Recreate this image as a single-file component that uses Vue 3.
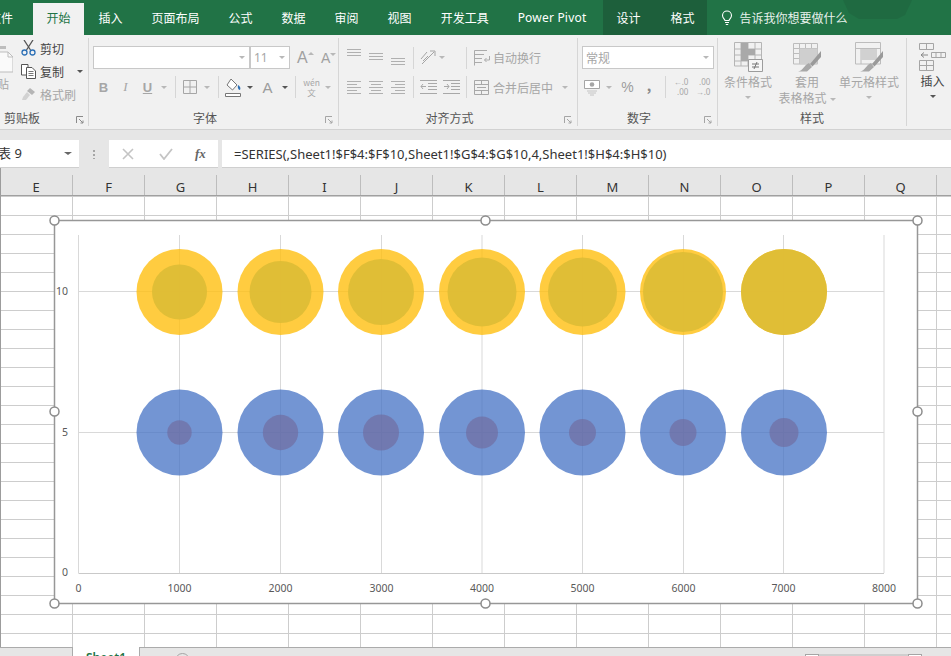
<template>
  <div class="excel">
    <div class="tabs">
      <span class="tab tab-file">文件</span>
      <span class="tab tab-home">开始</span>
      <span v-for="t in tabs" :key="t" class="tab">{{ t }}</span>
      <span class="tab tab-latin">Power Pivot</span>
      <div class="tool-tabs">
        <span>设计</span>
        <span>格式</span>
      </div>
      <svg class="bulb" width="12" height="16" viewBox="0 0 12 16" fill="none" stroke="#fff" stroke-width="1.1">
        <path d="M4 10.5C3.6 9 1.5 8 1.5 5.5a4.5 4.5 0 0 1 9 0C10.500 8 8.400 9 8 10.500Z" />
        <path d="M4 12.500h4M4.800 14.500h2.400" />
      </svg>
      <span class="tell">告诉我你想要做什么</span>
      <svg class="smudge" width="70" height="19" viewBox="0 0 70 19">
        <path d="M0 0H69L62 15L54 19H16L6 13Z" fill="#1f6a41" />
      </svg>
    </div>

    <div class="ribbon">
      <!-- 剪贴板 -->
      <div class="group g-clip">
        <div class="clip-body">
          <div class="paste">
            <svg width="13" height="28" viewBox="0 0 13 28">
              <path d="M-6 4H6V1H-1V4" fill="#bdbdbd" />
              <path d="M-2 7H8L13 12V27H-2Z" fill="#fafafa" stroke="#bdbdbd" />
              <path d="M8 7V12H13" fill="none" stroke="#bdbdbd" />
            </svg>
            <span>贴</span>
          </div>
          <div class="clip-list">
            <div class="clip-item">
              <svg width="15" height="16" viewBox="0 0 15 16" fill="none">
                <path d="M3 0L9.500 10M12 0L5.500 10" stroke="#555" stroke-width="1.300" />
                <circle cx="3.500" cy="12.500" r="2.500" stroke="#2b6fb5" stroke-width="1.300" />
                <circle cx="11.500" cy="12.500" r="2.500" stroke="#2b6fb5" stroke-width="1.300" />
              </svg>
              <span class="dark">剪切</span>
            </div>
            <div class="clip-item">
              <svg width="15" height="15" viewBox="0 0 15 15" fill="#fff" stroke="#555">
                <path d="M.5.500H7V11H.5Z" />
                <path d="M5.500 3.500H11L14.500 7V14.500H5.500Z" />
                <path d="M7.500 7.500H12.500M7.500 9.500H12.500M7.500 11.500H12.500" stroke-width=".8" />
              </svg>
              <span class="dark">复制</span>
              <i class="caret dark-caret copy-caret"></i>
            </div>
            <div class="clip-item">
              <svg width="15" height="15" viewBox="0 0 15 15">
                <path d="M9 1L14 5L11 8L6 4Z" fill="#b5b5b5" />
                <path d="M6 5L9 8L5 13L1 13L2 10Z" fill="#d2d2d2" />
              </svg>
              <span>格式刷</span>
            </div>
          </div>
        </div>
        <div class="g-label clip-label">
          <span>剪贴板</span>
          <svg class="launch" width="8" height="8" viewBox="0 0 8 8" fill="none" stroke="#8a8a8a">
            <path d="M.5 7V.5H7M3 3L7 7M4.500 7H7V4.500" />
          </svg>
        </div>
      </div>

      <!-- 字体 -->
      <div class="group g-font">
        <div class="g-body">
          <div class="row font-row1">
            <div class="input font-name"><i class="caret"></i></div>
            <div class="input font-size"><span>11</span><i class="caret"></i></div>
            <div class="grow-a big-a">A<i class="caret up"></i></div>
            <div class="grow-a small-a">A<i class="caret"></i></div>
          </div>
          <div class="row font-row2">
            <b class="fmt bold">B</b>
            <i class="fmt ital">I</i>
            <u class="fmt under">U</u>
            <i class="caret"></i>
            <i class="sep"></i>
            <svg width="14" height="14" viewBox="0 0 14 14" fill="none" stroke="#a6a6a6"><path d="M.5.500H13.500V13.500H.5ZM7 .5V13.500M.5 7H13.500" /></svg>
            <i class="caret"></i>
            <i class="sep"></i>
            <svg width="18" height="19" viewBox="0 0 18 19">
              <path d="M6 1L12 7L7.500 12L2 7Z" fill="#fff" stroke="#777" />
              <path d="M13 7C15 8 16 10 15 12C13 12 12.500 9 13 7Z" fill="#2b6fb5" />
              <path d="M.5 15.500H15.500V18.500H.5Z" fill="#fff" stroke="#777" />
            </svg>
            <i class="caret dark-caret"></i>
            <span class="font-a">A</span>
            <i class="caret dark-caret"></i>
            <i class="sep"></i>
            <span class="wen"><small>wén</small><small>文</small></span>
            <i class="caret"></i>
          </div>
        </div>
        <div class="g-label">
          <span>字体</span>
          <svg class="launch" width="8" height="8" viewBox="0 0 8 8" fill="none" stroke="#a5a5a5">
            <path d="M.5 7V.5H7M3 3L7 7M4.500 7H7V4.500" />
          </svg>
        </div>
      </div>

      <!-- 对齐方式 -->
      <div class="group g-align">
        <div class="g-body">
          <div class="row align-row1">
            <svg v-for="y in [3, 7, 12]" :key="y" width="14" height="23" viewBox="0 0 14 23" fill="none" stroke="#b0b0b0">
              <path :d="`M0 ${y}.5H14M0 ${y + 3}.5H14M0 ${y + 6}.5H14`" />
            </svg>
            <i class="sep"></i>
            <span class="orient">
              <svg width="17" height="17" viewBox="0 0 17 17" fill="none" stroke="#a5a5a5">
                <path d="M2 10L8 3M4 12L9 7M3 15L15 3M11 2H16V7" />
              </svg>
              <i class="caret"></i>
            </span>
            <span></span>
            <i class="sep"></i>
            <svg width="16" height="16" viewBox="0 0 16 16" fill="none" stroke="#ababab">
              <path d="M.5.500H13M.5 4.500H10M.5 8.500H8M.5 12.500H8M.5.500V15.500M15.500 6V10H10.500M12.500 8L10.500 10L12.500 12" />
            </svg>
            <span class="txt">自动换行</span>
          </div>
          <div class="row align-row2">
            <svg v-for="a in alignPaths" :key="a" width="14" height="14" viewBox="0 0 14 14" fill="none" stroke="#b0b0b0">
              <path :d="a" />
            </svg>
            <i class="sep"></i>
            <svg v-for="a in indentPaths" :key="a" width="17" height="14" viewBox="0 0 17 14" fill="none" stroke="#a8a8a8">
              <path :d="a" />
            </svg>
            <i class="sep"></i>
            <svg width="15" height="15" viewBox="0 0 15 15" fill="none" stroke="#a8a8a8">
              <path d="M.5.500H14.500V14.500H.5ZM.5 4.500H14.500M.5 10.500H14.500M3 7.500H12M7.500 .5V4.500M7.500 10.500V14.500" />
            </svg>
            <span class="txt">合并后居中</span>
            <i class="caret"></i>
          </div>
        </div>
        <div class="g-label">
          <span>对齐方式</span>
          <svg class="launch" width="8" height="8" viewBox="0 0 8 8" fill="none" stroke="#a5a5a5">
            <path d="M.5 7V.5H7M3 3L7 7M4.500 7H7V4.500" />
          </svg>
        </div>
      </div>

      <!-- 数字 -->
      <div class="group g-number">
        <div class="g-body">
          <div class="row">
            <div class="input num-format"><span>常规</span><i class="caret"></i></div>
          </div>
          <div class="row num-row2">
            <svg width="17" height="17" viewBox="0 0 17 17">
              <path d="M.5 1.500H15.500V9.500H.5Z" fill="#fff" stroke="#a5a5a5" />
              <circle cx="8" cy="5.500" r="2.300" fill="#a5a5a5" />
              <path d="M3 12H13M4 14H12M6 16H10" stroke="#c4c4c4" />
            </svg>
            <i class="caret"></i>
            <span class="pct">%</span>
            <span class="comma">,</span>
            <i class="sep"></i>
            <span class="dec"><span>←.0</span><span>.00</span></span>
            <span class="dec"><span>.00</span><span>→.0</span></span>
          </div>
        </div>
        <div class="g-label">
          <span>数字</span>
          <svg class="launch" width="8" height="8" viewBox="0 0 8 8" fill="none" stroke="#a5a5a5">
            <path d="M.5 7V.5H7M3 3L7 7M4.500 7H7V4.500" />
          </svg>
        </div>
      </div>

      <!-- 样式 -->
      <div class="group g-style">
        <div class="style-body">
          <div class="big w-cond">
            <svg width="30" height="30" viewBox="0 0 30 30" fill="none" stroke="#b5b5b5">
              <path d="M1.500.500H28.500V24H1.500ZM1.500 7H28.500M1.500 13H28.500M1.500 19H28.500M8 .5V24M15 .5V24M22 .5V24" />
              <path d="M8 1H15V7H22V13H15V19H8Z" fill="#a9a9a9" stroke="none" />
              <path d="M15.500 17.500H29.500V29.500H15.500Z" fill="#f6f6f6" stroke="#9c9c9c" />
              <path d="M19 22H26M19 25H26M24 20L21 27" stroke="#777" />
            </svg>
            <span>条件格式</span>
            <i class="caret"></i>
          </div>
          <div class="big w-table">
            <svg width="30" height="30" viewBox="0 0 30 30" fill="none" stroke="#bcbcbc">
              <path d="M1.500 1.500H25.500V22H1.500ZM1.500 6.500H25.500M1.500 11.500H25.500M1.500 16.500H25.500M7.500 1.500V22M13.500 1.500V22M19.500 1.500V22" />
              <path d="M7.500 6.500H25.500V22H7.500Z" fill="#cfcfcf" stroke="none" />
              <path d="M29 9L18 22L20.500 24.500L29 15Z" fill="#9a9a9a" stroke="none" />
              <path d="M17 21L20 25L15 29.500H6C11 29 12 23 17 21Z" fill="#a8a8a8" stroke="none" />
            </svg>
            <span>套用</span>
            <span class="with-caret">表格格式<i class="caret"></i></span>
          </div>
          <div class="big w-cell">
            <svg width="30" height="30" viewBox="0 0 30 30" fill="none" stroke="#bcbcbc">
              <path d="M1.500 .5H26.500V22H1.500ZM1.500 6.500H26.500M7 6.500V22" />
              <path d="M7 7H23V18H7Z" fill="#d1d1d1" stroke="none" />
              <path d="M29 9L18 22L20.500 24.500L29 15Z" fill="#9a9a9a" stroke="none" />
              <path d="M17 21L20 25L15 29.500H6C11 29 12 23 17 21Z" fill="#a8a8a8" stroke="none" />
            </svg>
            <span>单元格样式</span>
            <i class="caret"></i>
          </div>
        </div>
        <div class="g-label style-label"><span>样式</span></div>
      </div>

      <!-- 单元格 -->
      <div class="insert">
        <svg width="27" height="28" viewBox="0 0 27 28" fill="none" stroke="#a5a5a5">
          <path d="M.5.500H14.500V6.500H.5ZM7.500.5V6.500M.5 17.500H14.500V27.500H.5ZM7.500 17.500V27.500M.5 22.500H14.500" />
          <path d="M12.500 9.500H26.500V14.500H12.500ZM17 9.500V14.500M22 9.500V14.500" />
          <path d="M2 12H9M5 9.500L2 12L5 14.500" stroke="#888" />
        </svg>
        <span>插入</span>
        <i class="caret dark-caret"></i>
      </div>
    </div>

    <div class="formula-band">
      <div class="name-box"><span>表 9</span><i class="caret name-caret"></i></div>
      <span class="dots"></span>
      <div class="fx-box">
        <svg width="12" height="12" viewBox="0 0 12 12" fill="none" stroke="#c4c4c4" stroke-width="1.600"><path d="M1 1L11 11M11 1L1 11" /></svg>
        <svg width="14" height="12" viewBox="0 0 14 12" fill="none" stroke="#c4c4c4" stroke-width="1.800"><path d="M1 6L5 11L13 1" /></svg>
        <i class="fx-label">fx</i>
      </div>
      <div class="formula">=SERIES(,Sheet1!$F$4:$F$10,Sheet1!$G$4:$G$10,4,Sheet1!$H$4:$H$10)</div>
    </div>

    <div class="col-head">
      <span v-for="c in columns" :key="c" class="col">{{ c }}</span>
    </div>

    <div class="sheet">
      <svg class="chart" width="951" height="451" viewBox="0 196 951 451">
        <rect x="54.500" y="220.500" width="863" height="383" fill="#fff" stroke="#979797" stroke-width="1.500" />
        <g stroke="#d9d9d9">
          <path v-for="(x, i) in xGrid" :key="i" :d="`M${x} 235V573`" />
          <path d="M78.500 291.500H884M78.500 432.500H884" />
        </g>
        <path d="M78.500 573.500H884" stroke="#c9c9c9" />
        <circle v-for="b in bubbles" :key="b.id" :cx="b.x" :cy="b.y" :r="b.r" :fill="b.fill" :fill-opacity="b.opacity" />
        <g class="axis">
          <text x="68" y="295" text-anchor="end">10</text>
          <text x="68" y="436" text-anchor="end">5</text>
          <text x="68" y="576" text-anchor="end">0</text>
          <text v-for="(x, i) in xGrid" :key="i" :x="x" y="592" text-anchor="middle">{{ i * 1000 }}</text>
        </g>
        <circle v-for="h in handles" :key="h.join()" :cx="h[0]" :cy="h[1]" r="4.500" fill="#fff" stroke="#8c8c8c" stroke-width="1.500" />
      </svg>
    </div>

    <div class="status">
      <div class="sheet-tab">Sheet1</div>
      <span class="add"></span>
      <span class="zoom-minus"></span>
      <span class="zoom-box"></span>
      <span class="zoom-bar"></span>
      <span class="zoom-box"></span>
    </div>
  </div>
</template>

<script setup>
const tabs = ['插入', '页面布局', '公式', '数据', '审阅', '视图', '开发工具']
const columns = 'EFGHIJKLMNOPQ'.split('')

const alignPaths = [
  'M0 1.500H14M0 4.500H10M0 7.500H14M0 10.500H10M0 13.500H14',
  'M0 1.500H14M2 4.500H12M0 7.500H14M2 10.500H12M0 13.500H14',
  'M0 1.500H14M4 4.500H14M0 7.500H14M4 10.500H14M0 13.500H14'
]
const indentPaths = [
  'M0 .5H17M8 3.500H17M8 6.500H17M8 9.500H17M0 13.500H17M6 6.500H1M3 4L1 6.500L3 9',
  'M0 .5H17M8 3.500H17M8 6.500H17M8 9.500H17M0 13.500H17M1 6.500H6M4 4L6 6.500L4 9'
]

const xGrid = [78.5, 179.5, 280.5, 381.5, 482, 582.5, 683.5, 783.5, 884]
const centers = [179.5, 280.5, 381, 482, 582.5, 683, 784]
const goldInner = [27.5, 31, 33, 34.5, 34.5, 40, 43]
const blueInner = [12.2, 17.7, 18, 16, 13.5, 13.5, 14.5]

const bubbles = []
centers.forEach((x, i) => {
  bubbles.push({ id: 'go' + i, x, y: 292, r: 43, fill: '#ffbf10', opacity: 0.8 })
  bubbles.push({ id: 'gi' + i, x, y: 292, r: goldInner[i], fill: '#dfbd36', opacity: 0.97 })
  bubbles.push({ id: 'bo' + i, x, y: 432.5, r: 43, fill: '#4472c4', opacity: 0.75 })
  bubbles.push({ id: 'bi' + i, x, y: 432.5, r: blueInner[i], fill: '#70689a', opacity: 0.6 })
})

const handles = [
  [54.5, 220.5], [485.5, 220.5], [917.5, 220.5],
  [54.5, 411.5], [917.5, 411.5],
  [54.5, 603.5], [485.5, 603.5], [917.5, 603.5]
]
</script>

<style>
html, body {
  margin: 0;
  overflow: hidden;
}
</style>

<style scoped>
.excel {
  width: 951px;
  height: 656px;
  overflow: hidden;
  font-family: "Noto Sans", "Noto Sans CJK SC", sans-serif;
  font-size: 12px;
  color: #a6a6a6;
  background: #fff;
  display: flex;
  flex-direction: column;
}

/* tab bar */
.tabs {
  height: 35px;
  flex: none;
  background: #217346;
  color: #fff;
  display: flex;
  align-items: flex-end;
  position: relative;
  font-family: "Noto Sans CJK SC", sans-serif;
}
.tab {
  height: 32px;
  line-height: 30px;
  padding: 0 14.5px;
  white-space: nowrap;
}
.tab-file {
  margin-left: -11px;
  padding: 0 20px 0 0;
}
.tab-home {
  background: #f1f1f1;
  color: #217346;
  padding: 0 13.5px;
}
.tab-latin {
  font-family: "Noto Sans", sans-serif;
  letter-spacing: 0.2px;
  padding-right: 0;
}
.tool-tabs {
  margin-left: 17px;
  width: 104px;
  height: 35px;
  background: #1d5f3b;
  display: flex;
  gap: 30px;
  padding-left: 13px;
  box-sizing: border-box;
  line-height: 36px;
}
.bulb {
  margin: 0 6px 9px 14px;
}
.tell {
  line-height: 36px;
  height: 35px;
  color: #e8f1ec;
}
.smudge {
  position: absolute;
  left: 843px;
  top: 0;
}

/* ribbon */
.ribbon {
  height: 94px;
  flex: none;
  background: #f1f1f1;
  border-bottom: 1px solid #d2d2d2;
  display: flex;
  font-family: "Noto Sans CJK SC", sans-serif;
}
.group {
  height: 88px;
  margin-top: 3px;
  border-right: 1px solid #d6d6d6;
  flex: none;
  display: flex;
  flex-direction: column;
  box-sizing: border-box;
}
.g-clip { width: 89px; }
.g-font { width: 250px; }
.g-align { width: 239px; }
.g-number { width: 140px; }
.g-style { width: 189px; }
.g-body {
  height: 69px;
  padding: 8px 0 0 4px;
  box-sizing: border-box;
}
.g-label {
  display: flex;
  align-items: center;
  flex: 1;
  color: #555;
  padding-right: 5px;
}
.g-label > span {
  flex: 1;
  text-align: center;
  padding-top: 1px;
  margin-right: 4px;
}
.launch {
  flex: none;
  margin-top: 7px;
}
.style-label { padding-right: 0; }
.style-label > span { margin-right: 0; }
.clip-label > span {
  flex: none;
  width: 40px;
  margin-left: 2px;
  margin-right: 34px;
}
.row {
  display: flex;
  align-items: center;
  height: 23px;
}
.row + .row {
  margin-top: 7px;
  height: 22px;
}
.sep {
  width: 1px;
  height: 22px;
  background: #d6d6d6;
  flex: none;
}
.caret {
  display: inline-block;
  flex: none;
  width: 0;
  height: 0;
  border: 3px solid transparent;
  border-top: 3.5px solid #b8b8b8;
  border-bottom: 0;
}
.dark-caret { border-top-color: #555; }
.caret.up {
  border-top: 0;
  border-bottom: 3.5px solid #b8b8b8;
}
.dark { color: #444; }

/* clipboard */
.clip-body {
  height: 69px;
  display: flex;
}
.paste {
  width: 21px;
  padding-top: 7px;
  color: #a6a6a6;
  overflow: hidden;
  box-sizing: border-box;
}
.paste svg { display: block; }
.paste span {
  display: block;
  margin-left: -3px;
  margin-top: 3px;
  line-height: 16px;
}
.clip-list {
  display: flex;
  flex-direction: column;
  padding-top: 1px;
  gap: 5px;
}
.clip-item {
  display: flex;
  align-items: center;
  gap: 4px;
  height: 18px;
}
.clip-item svg { width: 15px; }
.copy-caret { margin-left: 9px; }

/* font group */
.input {
  height: 23px;
  box-sizing: border-box;
  background: #fff;
  border: 1px solid #c8c8c8;
  display: flex;
  align-items: center;
  padding: 0 4px 0 3px;
  flex: none;
}
.input .caret { margin-left: auto; }
.font-name { width: 157px; }
.font-size { width: 40px; font-family: "Noto Sans", sans-serif; }
.grow-a {
  font-family: "Liberation Sans", sans-serif;
  color: #a0a0a0;
  display: flex;
  align-items: flex-start;
}
.big-a {
  font-size: 16px;
  margin-left: 7px;
  width: 24px;
}
.small-a {
  font-size: 14px;
}
.grow-a .caret { margin-top: 3px; }
.font-row2 {
  display: grid;
  grid-template-columns: 21px 23px 21px 12px 10px 20px 14px 8px 23px 10px 25px 9px 12px 21px 12px;
  justify-items: center;
  align-items: center;
}
.fmt {
  font-family: "Liberation Serif", serif;
  font-size: 13px;
}
.bold { font-family: "Liberation Sans", sans-serif; }
.under { font-family: "Liberation Sans", sans-serif; font-weight: 700; }
.font-a {
  font-family: "Liberation Sans", sans-serif;
  font-size: 15px;
  color: #9c9c9c;
}
.wen {
  display: flex;
  flex-direction: column;
  align-items: center;
  line-height: 10px;
}
.wen small { font-size: 8.500px; }

/* alignment */
.align-row1, .align-row2 {
  display: grid;
  justify-items: center;
  align-items: center;
}
.align-row1 {
  grid-template-columns: 22px 22px 22px 8px 30px 15px 8px 23px 60px;
}
.align-row2 {
  grid-template-columns: 22px 22px 22px 8px 22px 24px 6px 24px 60px 24px;
}
.orient {
  display: flex;
  align-items: center;
  gap: 3px;
}
.txt {
  white-space: nowrap;
  justify-self: start;
}

/* number */
.num-format {
  width: 132px;
}
.num-row2 {
  display: grid;
  grid-template-columns: 21px 12px 25px 18px 14px 18px 26px;
  justify-items: center;
  align-items: center;
}
.pct {
  font-family: "Liberation Sans", sans-serif;
  font-size: 14px;
  color: #9c9c9c;
}
.comma {
  font-weight: 700;
  font-size: 14px;
  margin-top: -4px;
  color: #888;
}
.dec {
  display: flex;
  flex-direction: column;
  align-items: flex-end;
  font-family: "Noto Sans", sans-serif;
  font-size: 8px;
  line-height: 10px;
  white-space: nowrap;
}

/* styles */
.style-body {
  height: 69px;
  display: flex;
}
.big {
  flex: none;
  display: flex;
  flex-direction: column;
  align-items: center;
  line-height: 16px;
  padding-top: 4px;
  box-sizing: border-box;
}
.big svg { margin-bottom: 2px; }
.big > .caret { margin-top: 6px; }
.with-caret { white-space: nowrap; }
.with-caret .caret {
  margin-left: 3px;
  vertical-align: middle;
}
.w-cond { width: 60px; }
.w-table { width: 58px; }
.w-cell { width: 66px; }
.insert {
  margin-left: 12px;
  padding-top: 8px;
  display: flex;
  flex-direction: column;
  align-items: center;
  width: 27px;
  color: #444;
  line-height: 16px;
}
.insert svg { margin-bottom: 2px; flex: none; }
.insert .caret { margin-top: 6px; }

/* formula bar */
.formula-band {
  height: 38px;
  flex: none;
  background: #e6e6e6;
  box-sizing: border-box;
  padding-top: 10px;
  display: flex;
  align-items: stretch;
}
.name-box, .fx-box, .formula {
  height: 28px;
  background: #fff;
  border-bottom: 1px solid #cfcfcf;
  box-sizing: border-box;
  line-height: 29px;
}
.name-box {
  width: 79px;
  flex: none;
  display: flex;
  align-items: center;
  justify-content: space-between;
  padding-right: 7px;
  color: #333;
  font-size: 13px;
  font-family: "Noto Sans", "Noto Sans CJK SC", sans-serif;
}
.name-box span { margin-left: -2px; }
.name-caret {
  border-top-color: #666;
  border-left-width: 4px;
  border-right-width: 4px;
}
.dots {
  width: 2px;
  height: 10px;
  margin: 9px 14px 0;
  background: radial-gradient(circle, #a5a5a5 1px, transparent 1px) 0 0 / 2px 4px;
  flex: none;
}
.fx-box {
  width: 109px;
  flex: none;
  display: flex;
  align-items: center;
  padding-left: 13px;
  gap: 25px;
}
.fx-label {
  font-family: "Liberation Serif", serif;
  font-weight: 700;
  font-size: 13px;
  color: #666;
  margin-left: -3px;
}
.formula {
  margin-left: 4px;
  flex: 1;
  padding-left: 12px;
  color: #333;
  font-size: 13px;
  white-space: nowrap;
}

/* sheet */
.col-head {
  height: 28px;
  flex: none;
  background: #e6e6e6;
  border-bottom: 1px solid #a0a0a0;
  box-sizing: border-box;
  display: flex;
  align-items: flex-end;
  box-shadow: inset 1px 0 #9c9c9c;
}
.col {
  width: 72px;
  flex: none;
  height: 20px;
  line-height: 24px;
  text-align: center;
  font-size: 13px;
  color: #333;
  border-right: 1px solid #bdbdbd;
  box-sizing: border-box;
}
.col:first-child { width: 73px; }
.sheet {
  height: 451px;
  flex: none;
  position: relative;
  box-shadow: inset 1px 0 #9c9c9c;
  background-color: #fff;
  background-image:
    linear-gradient(to right, transparent 71px, #cdcdcd 71px),
    linear-gradient(to bottom, transparent 18px, #cdcdcd 18px);
  background-size: 72px 19px;
  background-position: 1px 1px;
}
.chart {
  position: absolute;
  left: 0;
  top: 0;
  overflow: visible;
}
.axis text {
  font-size: 10.500px;
  fill: #595959;
  font-family: "Noto Sans", sans-serif;
}

/* bottom strip */
.status {
  flex: 1;
  background: #e6e6e6;
  border-top: 1px solid #ababab;
  display: flex;
  box-sizing: border-box;
}
.sheet-tab {
  width: 68px;
  margin-left: 72px;
  margin-top: -1px;
  height: 10px;
  background: #fff;
  border-left: 1px solid #ababab;
  border-right: 1px solid #ababab;
  box-sizing: border-box;
  color: #217346;
  text-align: center;
  line-height: 22px;
  font-size: 12px;
  font-weight: 600;
}
.add {
  width: 13px;
  height: 13px;
  border: 1px solid #a5a5a5;
  border-radius: 50%;
  margin: 5px 0 0 35px;
  flex: none;
}
.zoom-minus {
  width: 6px;
  height: 1px;
  background: #a5a5a5;
  margin: 8px 11px 0 598px;
  flex: none;
}
.zoom-box {
  width: 14px;
  height: 10px;
  margin-top: 6px;
  background: #fff;
  border: 1px solid #a5a5a5;
  box-sizing: border-box;
  flex: none;
}
.zoom-bar {
  width: 89px;
  height: 10px;
  margin-top: 6px;
  background: #cfcfcf;
  flex: none;
}
</style>
